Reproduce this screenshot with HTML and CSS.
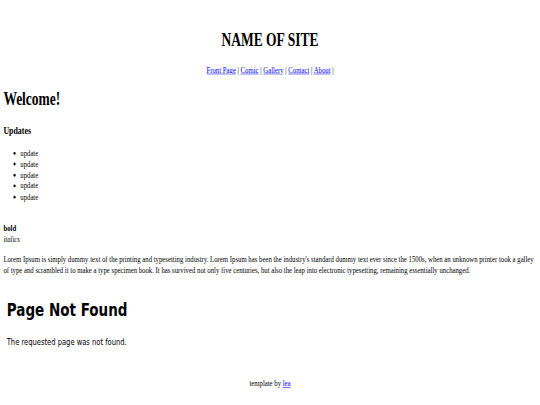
FILE: index.html
```html
<!DOCTYPE html>
<html>
<head>
<meta charset="utf-8">
<title>NAME OF SITE</title>
<link rel="stylesheet" href="styles.css">
</head>
<body>
<div class="viewport">
  <div class="page">
    <header class="site-header">
      <h1 class="site-title">NAME OF SITE</h1>
      <p class="nav"><a href="#">Front Page</a> | <a href="#">Comic</a> | <a href="#">Gallery</a> | <a href="#">Contact</a> | <a href="#">About</a> |</p>
    </header>
    <main class="content">
      <h1 class="welcome">Welcome!</h1>
      <h3 class="updates-title">Updates</h3>
      <ul class="updates">
        <li>update</li>
        <li>update</li>
        <li>update</li>
        <li>update</li>
        <li>update</li>
      </ul>
      <p class="styles"><b>bold</b><br><i>italics</i></p>
      <p class="lorem">Lorem Ipsum is simply dummy text of the printing and typesetting industry. Lorem Ipsum has been the industry's standard dummy text ever since the 1500s, when an unknown printer took a galley of type and scrambled it to make a type specimen book. It has survived not only five centuries, but also the leap into electronic typesetting, remaining essentially unchanged.</p>
      <section class="notfound">
        <h1 class="nf-title">Page Not Found</h1>
        <p class="nf-text">The requested page was not found.</p>
      </section>
    </main>
    <footer class="footer">template by <a href="#">lea</a></footer>
  </div>
</div>
</body>
</html>
```

FILE: styles.css
```css
html, body {
  margin: 0;
  padding: 0;
  background: #fff;
  overflow: hidden;
}

.viewport {
  width: 540px;
  height: 405px;
  overflow: hidden;
}

.page {
  display: flow-root;
  box-sizing: border-box;
  width: 1280px;
  height: 720px;
  padding: 0 8px;
  transform: scale(0.421875, 0.5625);
  transform-origin: 0 0;
  font-family: "Liberation Serif", "Times New Roman", serif;
  font-size: 16px;
  line-height: 19.5px;
  color: #000;
}

.page a {
  color: #0000ee;
  text-decoration: underline;
}

.site-title {
  margin: 52.5px 0 0;
  font-size: 32px;
  line-height: normal;
  font-weight: bold;
  text-align: center;
}

.nav {
  margin: 25.4px 0 0;
  text-align: center;
}

.welcome {
  margin: 23.4px 0 0;
  font-size: 32px;
  line-height: normal;
  font-weight: bold;
}

.updates-title {
  margin: 26.6px 0 0;
  font-size: 18.72px;
  line-height: normal;
  font-weight: bold;
}

.updates {
  margin: 18.5px 0 0;
  padding-left: 40px;
}

.styles {
  margin: 36px 0 0;
}

.lorem {
  margin: 16.4px 0 0;
}

.notfound {
  padding-left: 8px;
  font-family: "DejaVu Sans", Verdana, sans-serif;
}

.nf-title {
  margin: 42.2px 0 0;
  font-size: 32px;
  line-height: normal;
  font-weight: bold;
}

.nf-text {
  margin: 27.6px 0 0;
  font-size: 16px;
  line-height: normal;
}

.footer {
  margin: 55.5px 0 0;
  text-align: center;
}
```
